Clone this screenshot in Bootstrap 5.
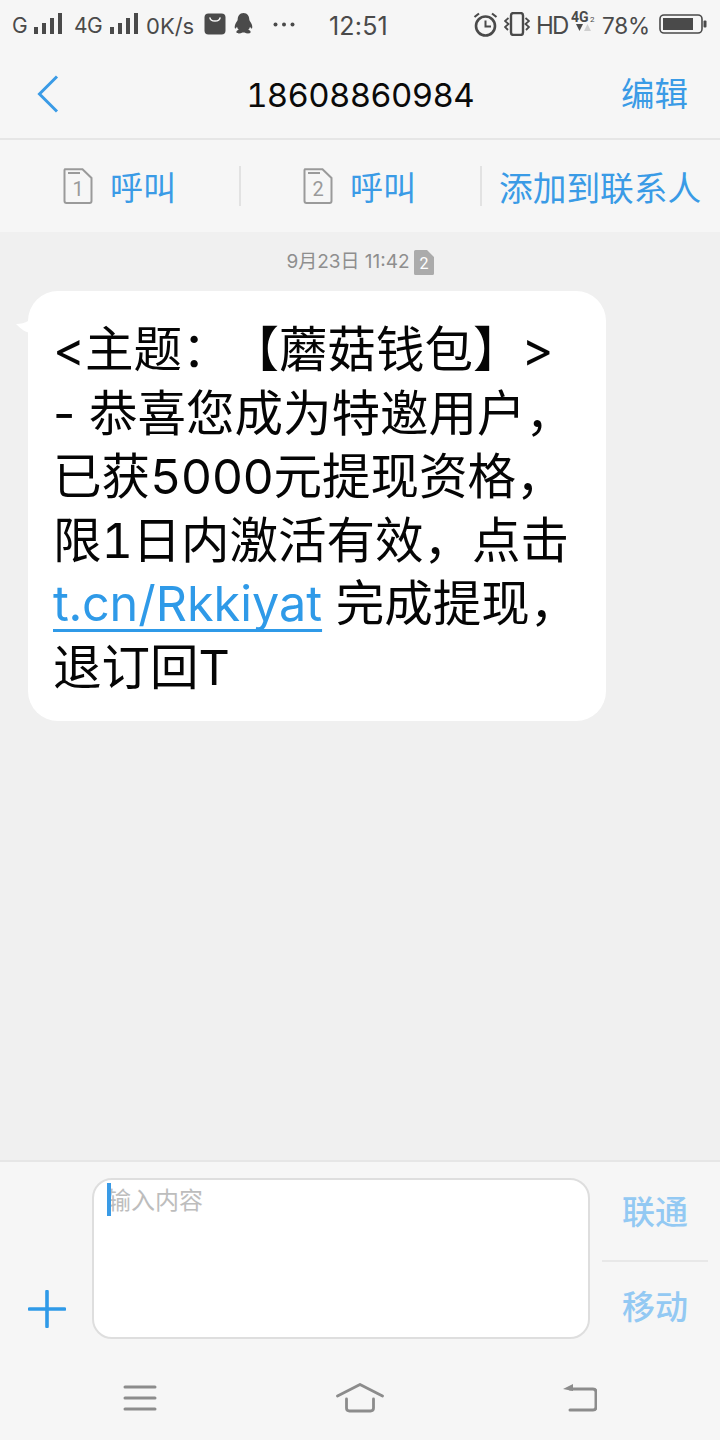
<!DOCTYPE html>
<html lang="zh-CN">
<head>
<meta charset="utf-8">
<title>短信</title>
<link href="https://cdn.jsdelivr.net/npm/bootstrap@5.3.0/dist/css/bootstrap.min.css" rel="stylesheet">
<style>
html,body{margin:0;padding:0;background:#f6f6f6}
body{width:720px;height:1440px;overflow:hidden;font-family:Inter,"Noto Sans CJK SC",sans-serif;text-spacing-trim:space-all}
.screen{width:720px;height:1440px}
.sbar{height:50px;background:#f6f6f6;color:#4a4a4a;padding-bottom:2px;font-size:22px;line-height:36px}
.sbar svg{display:block;flex:none}
.st{white-space:nowrap;flex:none;padding-top:4px}
.s-g{margin-left:12px;width:15px;font-size:21px}
.s-b1{margin-left:7px}
.s-4g{margin-left:12px;width:29px;font-size:21px;letter-spacing:-.5px}
.s-b2{margin-left:7px}
.s-net{margin-left:8px;width:52px;font-size:22px;letter-spacing:0}
.s-bag{margin-left:6px}
.s-qq{margin-left:8px}
.s-dots{margin-left:20px}
.s-time{margin-left:34px;width:62px;font-size:25px;letter-spacing:.2px}
.s-alarm{margin-left:82px}
.s-vib{margin-left:6px}
.s-hd{margin-left:6px;width:30px;font-size:24px;letter-spacing:-1.800px}
.s-sig{margin-left:5px;margin-bottom:6px}
.s-pct{margin-left:6px;width:48px;font-size:22.500px;letter-spacing:-.2px}
.s-bat{margin-left:9px}
.hdr{height:90px;background:#f6f6f6;border-bottom:2px solid #e6e6e6}
.hdr-back{width:100px;padding-left:37px}
.hdr-title{font-size:33px;color:#0a0a0a;line-height:1;padding-top:2px;font-feature-settings:"tnum";letter-spacing:-.7px}
.hdr-edit{width:100px;text-align:right;padding-right:32px;color:#3a9be6;font-size:33.500px;line-height:1;padding-top:2px}
.acts{height:92px;background:#f6f6f6}
.act{height:40px;flex:0 0 241px;color:#3a9be6;font-size:33px;line-height:1;white-space:nowrap}
.act-line{border-right:2px solid #e2e2e2}
.act span{margin-top:5px}
.act-last{flex:1 1 auto;font-size:33.700px;padding-left:17px;justify-content:flex-start!important}
.act-sim{margin-right:17px}
.act-shift{padding-right:2px}
.thread{background:#f0f0f0;padding-top:14px}
.stamp{height:32px;color:#8e8e8e;font-size:19px;line-height:32px}
.stamp svg{margin-left:4px}
.bubble{position:relative;margin:13px 0 0 28px;width:578px;height:430px;border-radius:30px;background:#fff;padding:27px 0 0 25px;color:#050505;font-size:48.500px;line-height:63.600px;white-space:nowrap}
.bubble-tail{position:absolute;left:-12px;top:30px}
.num{font-feature-settings:"tnum";letter-spacing:-.6px}
.sms-link{color:#2f9ae8;text-decoration:underline;text-decoration-color:#2f9ae8;text-decoration-thickness:3px;text-underline-offset:8px;text-decoration-skip-ink:none;font-feature-settings:"tnum"}
.compose{height:280px;background:#f6f6f6;border-top:2px solid #e6e6e6}
.cmp-row{height:179px;padding-top:16px}
.plus{width:92px;padding:0 0 13px 28px}
.box{position:relative;width:498px;height:161px}
.box .form-control{width:100%;height:100%;border:2px solid #dedede;border-radius:20px;resize:none;background:#fff;padding:2px 13px;font-size:24px;line-height:34px;box-shadow:none;font-family:"Noto Sans CJK SC",sans-serif}
.box .form-control::placeholder{color:#bdbdbd;opacity:1}
.caret-bar{position:absolute;left:15px;top:5px;width:4px;height:33px;background:#3a9be6}
.sims{margin-left:12px;width:106px;height:161px;color:#93c9f3;font-size:33px;line-height:1;font-weight:500}
.sim-btn{height:82px;padding-bottom:13px}
.sim-btn+.sim-btn{height:79px;border-top:2px solid #e8e8e8;padding-top:13px;padding-bottom:0}
.nav3{height:99px;padding:15px 0 0 30px}
.nav3-i{width:220px}
</style>
</head>
<body>
<main class="screen d-flex flex-column">
  <div class="sbar d-flex align-items-center">
    <span class="st s-g">G</span>
    <svg class="s-b1" width="28" height="22" viewBox="0 0 28 22"><g fill="#4a4a4a"><rect x="0" y="14" width="4" height="7"/><rect x="8" y="10" width="4" height="11"/><rect x="16" y="5" width="4" height="16"/><rect x="24" y="0" width="4" height="21"/></g></svg>
    <span class="st s-4g">4G</span>
    <svg class="s-b2" width="28" height="22" viewBox="0 0 28 22"><g fill="#4a4a4a"><rect x="0" y="14" width="4" height="7"/><rect x="8" y="10" width="4" height="11"/><rect x="16" y="5" width="4" height="16"/><rect x="24" y="0" width="4" height="21"/></g></svg>
    <span class="st s-net">0K/s</span>
    <svg class="s-bag" width="22" height="22" viewBox="0 0 22 22"><rect width="21" height="21" x=".5" y=".5" rx="4" fill="#4a4a4a"/><path d="M6 5c.6 4 9.400 4 10 0" fill="none" stroke="#f6f6f6" stroke-width="1.600" stroke-linecap="round"/></svg>
    <svg class="s-qq" width="19" height="22" viewBox="0 0 19 22"><path d="M9.500 0C5.500 0 3.800 3 3.700 6.500 3.500 8 2 9.500 1.200 11.500.4 13.500.6 15.500 1.300 15.500c.6 0 1.200-1 1.700-1.800.2 1.200.8 2.300 1.700 3.100C3.200 17.300 2 18.200 2.500 19.500c.6 1.300 4 1.200 6-.1h2c2 1.300 5.400 1.400 6 .1.500-1.300-.7-2.200-2.200-2.700.9-.8 1.500-1.900 1.700-3.100.5.800 1.100 1.800 1.700 1.800.7 0 .9-2 .1-4C17 9.500 15.500 8 15.300 6.500 15.200 3 13.500 0 9.500 0z" fill="#4a4a4a"/></svg>
    <svg class="s-dots" width="22" height="5" viewBox="0 0 22 5"><g fill="#4a4a4a"><circle cx="2.500" cy="2.500" r="2"/><circle cx="11" cy="2.500" r="2"/><circle cx="19.500" cy="2.500" r="2"/></g></svg>
    <span class="st s-time">12:51</span>
    <svg class="s-alarm" width="25" height="25" viewBox="0 0 25 25"><g fill="none" stroke="#4a4a4a"><circle cx="12.500" cy="14" r="9.500" stroke-width="2.600"/><path d="M12.500 8.500V14.500H18" stroke-width="2"/><path d="M1.500 5 6 1.500M23.500 5 19 1.500" stroke-width="2.200"/></g></svg>
    <svg class="s-vib" width="26" height="24" viewBox="0 0 26 24"><g fill="none" stroke="#4a4a4a"><rect x="7" y="1" width="12" height="22" rx="2.500" stroke-width="2.400"/><path d="M4.500 6 1 9l3.500 3L1 15l3 3M21.500 6 25 9l-3.500 3 3.500 3-3 3" stroke-width="1.800"/></g></svg>
    <span class="st s-hd">HD</span>
    <svg class="s-sig" width="25" height="24" viewBox="0 0 25 24"><g fill="#4a4a4a"><polygon points="5,15 12,15 8.500,22"/></g><polygon points="13,22 20,22 16.500,15" fill="#cfcfcf"/><text x="0" y="13" font-size="14" font-weight="700" fill="#4a4a4a" font-family="Roboto,sans-serif">4G</text><text x="19" y="13" font-size="8" fill="#4a4a4a" font-family="Roboto,sans-serif">2</text></svg>
    <span class="st s-pct">78%</span>
    <svg class="s-bat" width="48" height="20" viewBox="0 0 48 20"><rect x="1" y="1" width="42" height="18" rx="4" fill="none" stroke="#4a4a4a" stroke-width="1.600"/><rect x="4" y="4" width="30" height="12" fill="#4a4a4a"/><rect x="44.500" y="6.500" width="3" height="7" rx="1" fill="#4a4a4a"/></svg>
  </div>
  <header class="hdr d-flex align-items-center justify-content-between">
    <div class="hdr-back"><svg class="d-block" width="22" height="38" viewBox="0 0 22 38"><path d="M20 1.500 2.500 19 20 36.500" fill="none" stroke="#3a9be6" stroke-width="3"/></svg></div>
    <div class="hdr-title">18608860984</div>
    <div class="hdr-edit">编辑</div>
  </header>
  <nav class="acts d-flex align-items-center">
    <div class="act act-line d-flex align-items-center justify-content-center">
      <svg class="act-sim" width="30" height="36" viewBox="0 0 30 36"><path d="M2 1.200H19.500L28.500 10V33a2 2 0 0 1-2 2H3.500a2 2 0 0 1-2-2V2z" fill="none" stroke="#9a9a9a" stroke-width="2"/><path d="M5 5H17" stroke="#9a9a9a" stroke-width="2"/><text x="15" y="28" text-anchor="middle" font-size="20" fill="#9a9a9a" font-family="Roboto,sans-serif">1</text></svg>
      <span>呼叫</span>
    </div>
    <div class="act act-line act-shift d-flex align-items-center justify-content-center">
      <svg class="act-sim" width="30" height="36" viewBox="0 0 30 36"><path d="M2 1.200H19.500L28.500 10V33a2 2 0 0 1-2 2H3.500a2 2 0 0 1-2-2V2z" fill="none" stroke="#9a9a9a" stroke-width="2"/><path d="M5 5H17" stroke="#9a9a9a" stroke-width="2"/><text x="15" y="28" text-anchor="middle" font-size="20" fill="#9a9a9a" font-family="Roboto,sans-serif">2</text></svg>
      <span>呼叫</span>
    </div>
    <div class="act act-last d-flex align-items-center justify-content-center"><span>添加到联系人</span></div>
  </nav>
  <section class="thread flex-grow-1">
    <div class="stamp d-flex justify-content-center align-items-center">
      <span>9月23日 11:42</span>
      <svg width="20" height="25" viewBox="0 0 20 25"><path d="M1.500 0H13L20 7V23.500a1.500 1.500 0 0 1-1.500 1.500H1.500A1.500 1.500 0 0 1 0 23.500V1.500A1.500 1.500 0 0 1 1.500 0z" fill="#ababab"/><text x="10" y="19" text-anchor="middle" font-size="16" fill="#fff" font-family="Roboto,sans-serif">2</text></svg>
    </div>
    <article class="bubble">
      <svg class="bubble-tail" width="16" height="12" viewBox="0 0 16 12"><path d="M0 3C5 3 9 2 12 0H16V12C10 12 5 8 0 3z" fill="#fff"/></svg>
      &lt;主题：【蘑菇钱包】&gt;<br>
      - 恭喜您成为特邀用户，<br>
      已获<span class="num">5000</span>元提现资格，<br>
      限<span class="num">1</span>日内激活有效，点击<br>
      <a class="sms-link" href="#">t.cn/Rkkiyat</a> 完成提现，<br>
      退订回T
    </article>
  </section>
  <footer class="compose">
    <div class="cmp-row d-flex">
      <div class="plus d-flex align-items-end">
        <svg width="38" height="38" viewBox="0 0 38 38"><path d="M19 1.500V36.500M1.500 19H36.500" fill="none" stroke="#2f9ae8" stroke-width="3.600" stroke-linecap="round"/></svg>
      </div>
      <div class="box">
        <textarea class="form-control" placeholder="输入内容" aria-label="输入内容"></textarea>
        <span class="caret-bar"></span>
      </div>
      <div class="sims d-flex flex-column">
        <div class="sim-btn d-flex align-items-center justify-content-center">联通</div>
        <div class="sim-btn d-flex align-items-center justify-content-center">移动</div>
      </div>
    </div>
    <div class="nav3 d-flex">
      <div class="nav3-i d-flex align-items-center justify-content-center">
        <svg width="34" height="26" viewBox="0 0 34 26"><path d="M2 2H32M2 13H32M2 24H32" fill="none" stroke="#8c8c8c" stroke-width="3" stroke-linecap="round"/></svg>
      </div>
      <div class="nav3-i d-flex align-items-center justify-content-center">
        <svg width="48" height="30" viewBox="0 0 48 30"><path d="M1.500 13 24 1.500 46.500 13M10.500 16V25q0 3 3 3H34.500q3 0 3-3V16" fill="none" stroke="#8c8c8c" stroke-width="2.800" stroke-linecap="round"/></svg>
      </div>
      <div class="nav3-i d-flex align-items-center justify-content-center">
        <svg width="34" height="28" viewBox="0 0 34 28"><path d="M7 5H30q3 0 3 3V23q0 3-3 3H7" fill="none" stroke="#8c8c8c" stroke-width="3" stroke-linecap="round"/><polygon points="0,5 10,0 10,7" fill="#8c8c8c"/></svg>
      </div>
    </div>
  </footer>
</main>
</body>
</html>
